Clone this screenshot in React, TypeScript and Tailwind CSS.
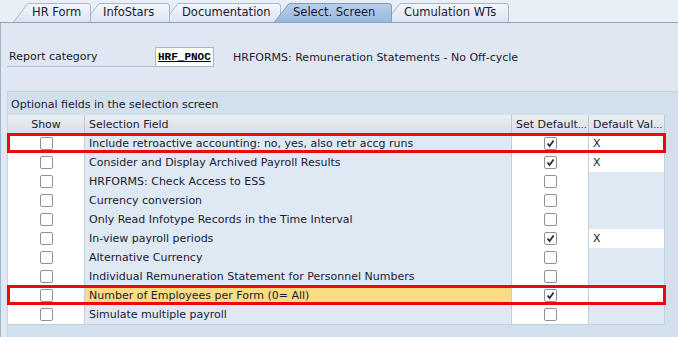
import React from "react";

const tabs = [
  { label: "HR Form", w: 78, active: false },
  { label: "InfoStars", w: 86, active: false },
  { label: "Documentation", w: 118, active: false },
  { label: "Select. Screen", w: 118, active: true },
  { label: "Cumulation WTs", w: 124, active: false },
];

const rows = [
  { text: "Include retroactive accounting: no, yes, also retr accg runs", def: true, val: "X", mark: true },
  { text: "Consider and Display Archived Payroll Results", def: true, val: "X" },
  { text: "HRFORMS: Check Access to ESS", def: false, val: "" },
  { text: "Currency conversion", def: false, val: "" },
  { text: "Only Read Infotype Records in the Time Interval", def: false, val: "" },
  { text: "In-view payroll periods", def: true, val: "X" },
  { text: "Alternative Currency", def: false, val: "" },
  { text: "Individual Remuneration Statement for Personnel Numbers", def: false, val: "" },
  { text: "Number of Employees per Form (0= All)", def: true, val: "", mark: true, yellow: true },
  { text: "Simulate multiple payroll", def: false, val: "" },
];

const Tab = ({ label, w, active, idx }: { label: string; w: number; active: boolean; idx: number }) => (
  <div className="relative -ml-[7px] first:ml-0 h-[19px]" style={{ width: w, zIndex: active ? 20 : 10 - idx }}>
    <svg className="absolute inset-0" width={w} height={19} viewBox={`0 0 ${w} 19`}>
      <defs>
        <linearGradient id={`tabgrad${idx}`} x1="0" y1="0" x2="0" y2="1">
          <stop offset="0" stopColor={active ? "#b9cfe9" : "#f4f7fb"} />
          <stop offset="1" stopColor={active ? "#9ab8dd" : "#dbe5f0"} />
        </linearGradient>
      </defs>
      <path
        d={`M0.5 19 L15 0.5 L${w - 3} 0.5 Q${w - 0.5} 0.5 ${w - 0.5} 3 L${w - 0.5} 19`}
        fill={`url(#tabgrad${idx})`}
        stroke={active ? "#7f9cc3" : "#a6b8cf"}
      />
    </svg>
    <span className="relative block pl-[19px] pt-[2px] text-[11.5px] leading-[15px] text-[#1a1a33] whitespace-nowrap">
      {label}
    </span>
  </div>
);

const Check = ({ on }: { on: boolean }) => (
  <div className="w-[13px] h-[13px] rounded-[2px] border border-[#8e9195] bg-white flex items-center justify-center">
    {on && (
      <svg width="9" height="9" viewBox="0 0 9 9">
        <path d="M1.5 4.5 L3.6 7 L7.6 1.5" fill="none" stroke="#2b2d33" strokeWidth="1.8" />
      </svg>
    )}
  </div>
);

const Head = ({ label, dots, center }: { label: string; dots?: boolean; center?: boolean }) => (
  <div
    className={`h-[19px] leading-[19px] bg-gradient-to-b from-[#eceff2] to-[#d9dee4] border-r border-b border-[#c0c8d2] whitespace-nowrap ${
      center ? "text-center" : "pl-[4px]"
    }`}
  >
    {label}
    {dots && <span className="text-[9px] leading-none tracking-[-1px]">…</span>}
  </div>
);

export default function App() {
  return (
    <div className="w-[678px] h-[337px] overflow-hidden bg-[#dfe8f2] font-['DejaVu_Sans',sans-serif] text-[11px] text-[#1a1a33]">
      <div className="h-[23px] bg-[#e9eff6] flex items-end pl-[13px] border-b border-[#8aa3c4]">
        {tabs.map((t, i) => (
          <Tab key={t.label} label={t.label} w={t.w} active={t.active} idx={i} />
        ))}
      </div>

      <div className="h-[314px] border-l border-[#9fb4cd] pl-[6px] flex flex-col">
        <div className="mt-[24px] h-[20px] flex items-center">
          <div className="w-[148px] h-[20px] pl-[2px] pt-[2px] border-b border-[#aebdcf] flex items-center">Report category</div>
          <div className="w-[59px] h-[20px] bg-white border border-[#a9b6c6] px-[2px] pt-[1px] flex items-center font-['Liberation_Mono',monospace] text-[11px] font-semibold underline decoration-[#000] text-black">
            HRF_PNOC
          </div>
          <div className="ml-[19px] pt-[2px]">HRFORMS: Remuneration Statements - No Off-cycle</div>
        </div>

        <div className="mt-[24px] flex-1 bg-[#d2dfec] border-l border-t border-[#c6d3e1] flex flex-col">
          <div className="h-[23px] pl-[3px] pt-[5px] leading-[16px]">Optional fields in the selection screen</div>
          <div className="w-[657px] grid grid-cols-[77px_427px_77px_76px]">
            <Head label="Show" center />
            <Head label="Selection Field" />
            <Head label="Set Default" dots />
            <Head label="Default Val" dots />
            {rows.map((r) => (
              <div key={r.text} className="relative col-span-4 grid grid-cols-[77px_427px_77px_76px] h-[19px]">
                <div className="bg-white border-r border-b border-[#c3cfdc] flex items-center justify-center">
                  <Check on={false} />
                </div>
                <div
                  className={`${r.yellow ? "bg-[#fbdc85]" : "bg-[#dfe9f4]"} border-r border-b border-[#c3cfdc] pl-[4px] leading-[19px] whitespace-nowrap`}
                >
                  {r.text}
                </div>
                <div className="bg-white border-r border-b border-[#c3cfdc] flex items-center justify-center">
                  <Check on={r.def} />
                </div>
                <div
                  className={`${r.val || r.mark ? "bg-white" : "bg-[#dfe9f4]"} border-r border-b border-[#c3cfdc] pl-[4px] leading-[19px]`}
                >
                  {r.val}
                </div>
                {r.mark && <div className="absolute -left-[1px] -top-[1px] -right-[1px] -bottom-0 border-[3px] border-[#ee0a0a] pointer-events-none" />}
              </div>
            ))}
          </div>
        </div>
      </div>
    </div>
  );
}
